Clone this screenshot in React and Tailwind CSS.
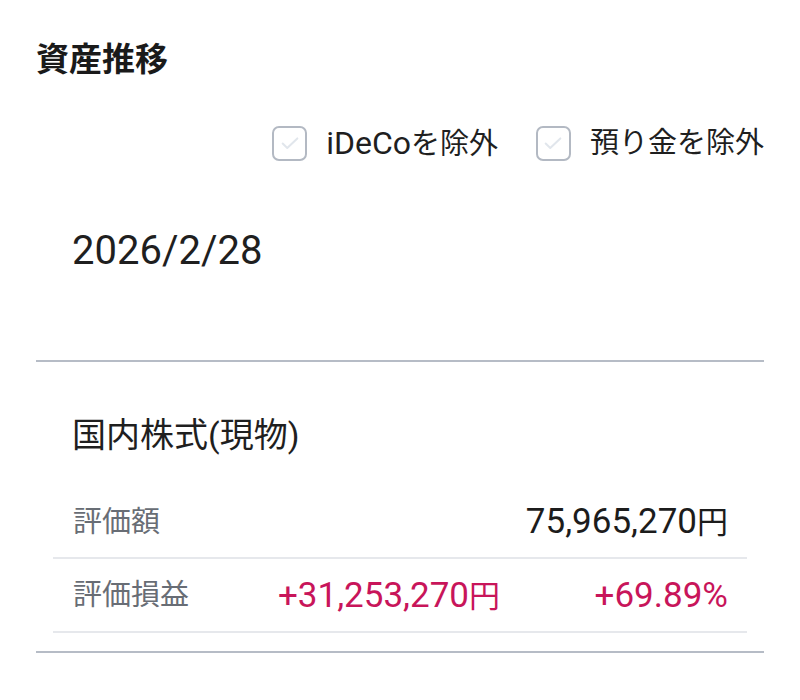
import React from 'react';

function CheckBox({ latin, label }) {
  return (
    <label className="flex items-center gap-[19px]">
      <span className="flex h-[35px] w-[35px] items-center justify-center rounded-[7px] border-[2.5px] border-[#b3b9c3] bg-white">
        <svg width="22" height="22" viewBox="0 0 24 24" fill="none" stroke="#e1e6ec" strokeWidth="2.2" strokeLinecap="round" strokeLinejoin="round">
          <path d="M4 12.5l5 5L20 7" />
        </svg>
      </span>
      <span className="text-[29px] leading-none text-[#1f1f1f]">
        {latin && <span className="text-[32px]">{latin}</span>}
        {label}
      </span>
    </label>
  );
}

function Yen({ value, className }) {
  return (
    <span className={className}>
      <span className="text-[35px]">{value}</span>
      <span className="text-[31px]">円</span>
    </span>
  );
}

function App() {
  return (
    <div
      className="h-[700px] w-[800px] bg-white px-9"
      style={{ fontFamily: 'Roboto, "Noto Sans CJK JP", sans-serif' }}
    >
      <div className="flex h-[118px] items-center">
        <h2 className="text-[33px] font-bold leading-none text-[#1a1a1a]">資産推移</h2>
      </div>

      <div className="flex h-[50px] items-center justify-end gap-[38px]">
        <CheckBox latin="iDeCo" label="を除外" />
        <CheckBox label="預り金を除外" />
      </div>

      <div className="h-[192px] pl-9 pt-[59px] text-[40px] leading-[48px] text-[#1f1f1f]">2026/2/28</div>

      <div className="h-[2px] bg-[#b6bcc6]" />

      <div className="h-[123px] pl-9 pt-[49px] text-[34px] leading-[48px] text-[#1f1f1f]">国内株式(現物)</div>

      <div className="mx-[17px]">
        <div className="flex h-[74px] items-center justify-between border-b-2 border-[#e6e8ec] pl-5 pr-[19px] pt-[3px]">
          <span className="text-[29px] text-[#686d75]">評価額</span>
          <Yen value="75,965,270" className="text-[#1c1c1c]" />
        </div>
        <div className="flex h-[74px] items-center border-b-2 border-[#e6e8ec] pl-5 pr-[19px] pt-[2px]">
          <span className="w-[205px] text-[29px] text-[#686d75]">評価損益</span>
          <Yen value="+31,253,270" className="text-[#c8155a]" />
          <span className="ml-auto text-[35px] text-[#c8155a]">+69.89%</span>
        </div>
      </div>

      <div className="mt-[18px] h-[2px] bg-[#b6bcc6]" />
    </div>
  );
}

export default App;
